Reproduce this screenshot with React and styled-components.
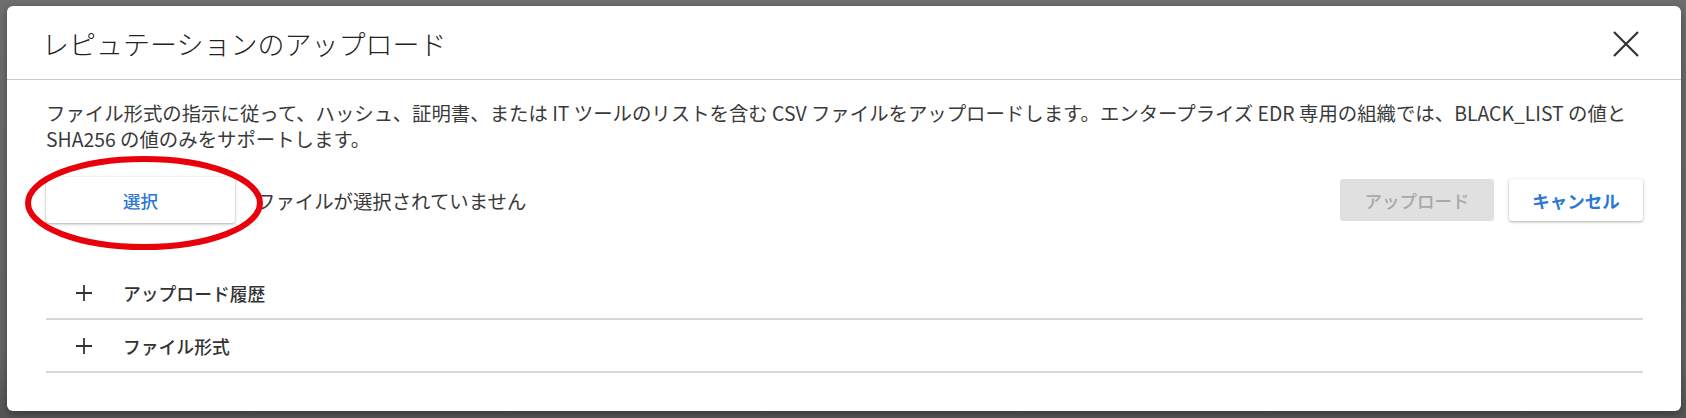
import React from "react";
import styled, { createGlobalStyle } from "styled-components";

const GlobalStyle = createGlobalStyle`
  html, body {
    margin: 0;
    padding: 0;
    background: #6b6b6b;
  }
  body {
    font-family: "Noto Sans CJK JP", "Noto Sans", sans-serif;
  }
`;

const Backdrop = styled.div`
  width: 1686px;
  height: 418px;
  box-sizing: border-box;
  padding: 6px 5px 7px 7px;
  background: linear-gradient(#6e6e6e, #666 85%, #555);
`;

const Dialog = styled.div`
  height: 405px;
  background: #fff;
  border-radius: 6px;
  box-shadow: 0 3px 8px rgba(0, 0, 0, 0.35);
  display: flex;
  flex-direction: column;
`;

const Header = styled.div`
  height: 74px;
  box-sizing: border-box;
  display: flex;
  align-items: center;
  justify-content: space-between;
  padding: 2px 41px 0 35px;
  border-bottom: 1px solid #c3ccd2;

  h2 {
    margin: 0;
    font-size: 27px;
    font-weight: 300;
    color: #222;
  }
`;

const CloseButton = styled.button`
  border: none;
  background: none;
  padding: 0;
  width: 28px;
  height: 28px;
  display: flex;
  align-items: center;
  justify-content: center;
  cursor: pointer;
`;

const Body = styled.div`
  padding: 20px 38px 0 39px;
`;

const Description = styled.p`
  margin: 0;
  font-size: 19.4px;
  line-height: 26px;
  color: #3a3a3a;
`;

const ActionRow = styled.div`
  display: flex;
  align-items: center;
  margin-top: 25px;
  height: 46px;
`;

const PickWrap = styled.div`
  position: relative;
`;

const Ellipse = styled.svg`
  position: absolute;
  left: -22px;
  top: -22px;
  pointer-events: none;
`;

const Button = styled.button`
  height: ${(p) => (p.$tall ? "46px" : "42px")};
  width: ${(p) => p.$w}px;
  border: none;
  border-radius: 3px;
  font-family: inherit;
  font-size: 17.5px;
  font-weight: ${(p) => (p.$bold ? 700 : 500)};
  color: ${(p) => (p.disabled ? "#a8a8a8" : "#2b78d4")};
  background: ${(p) => (p.disabled ? "#e0e0e0" : "#fff")};
  box-shadow: ${(p) =>
    p.disabled ? "none" : "0 1px 3px rgba(0,0,0,0.32), 0 0 1px rgba(0,0,0,0.1)"};
  cursor: ${(p) => (p.disabled ? "default" : "pointer")};
`;

const FileStatus = styled.span`
  margin-left: 21px;
  font-size: 19.4px;
  color: #3a3a3a;
  flex: 1;
`;

const ButtonGroup = styled.div`
  display: flex;
  gap: 15px;
`;

const Accordion = styled.div`
  margin-top: 44px;
`;

const Row = styled.div`
  height: 53px;
  box-sizing: border-box;
  display: flex;
  align-items: center;
  padding-left: 29px;
  gap: 30px;
  border-bottom: 2px solid #d2dade;
  font-size: 17.8px;
  font-weight: 500;
  color: #333;
`;

const Plus = () => (
  <svg width="18" height="18" viewBox="0 0 18 18">
    <path d="M9 1v16M1 9h16" stroke="#333" strokeWidth="1.8" />
  </svg>
);

export default function App() {
  return (
    <>
      <GlobalStyle />
      <Backdrop>
        <Dialog>
          <Header>
            <h2>レピュテーションのアップロード</h2>
            <CloseButton aria-label="close">
              <svg width="26" height="26" viewBox="0 0 26 26">
                <path d="M1 1L25 25M25 1L1 25" stroke="#333" strokeWidth="2.2" />
              </svg>
            </CloseButton>
          </Header>
          <Body>
            <Description>
              ファイル形式の指示に従って、ハッシュ、証明書、または IT ツールのリストを含む CSV ファイルをアップロードします。エンタープライズ EDR 専用の組織では、BLACK_LIST の値と SHA256 の値のみをサポートします。
            </Description>
            <ActionRow>
              <PickWrap>
                <Button $tall $w={189}>選択</Button>
                <Ellipse width="240" height="96" viewBox="0 0 240 96">
                  <ellipse cx="120" cy="48" rx="116" ry="44" fill="none" stroke="#e8000b" strokeWidth="6" />
                </Ellipse>
              </PickWrap>
              <FileStatus>ファイルが選択されていません</FileStatus>
              <ButtonGroup>
                <Button disabled $w={154}>アップロード</Button>
                <Button $bold $w={134}>キャンセル</Button>
              </ButtonGroup>
            </ActionRow>
            <Accordion>
              <Row><Plus />アップロード履歴</Row>
              <Row><Plus />ファイル形式</Row>
            </Accordion>
          </Body>
        </Dialog>
      </Backdrop>
    </>
  );
}
